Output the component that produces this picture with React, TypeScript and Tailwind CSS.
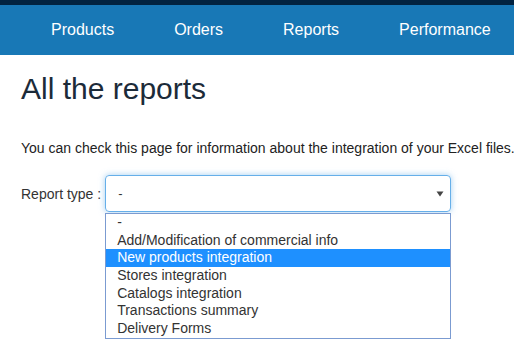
import { useState } from "react";

const NAV_ITEMS = ["Products", "Orders", "Reports", "Performance"];

const REPORT_TYPES = [
  "-",
  "Add/Modification of commercial info",
  "New products integration",
  "Stores integration",
  "Catalogs integration",
  "Transactions summary",
  "Delivery Forms",
];

function CaretDown() {
  return (
    <svg width="8" height="6" viewBox="0 0 8 6" className="text-[#444]">
      <path d="M0.5 0.5 L7.5 0.5 L4 5.5 Z" fill="currentColor" />
    </svg>
  );
}

export default function App() {
  const [hovered] = useState(2);

  return (
    <div className="w-[514px] h-[361px] overflow-hidden bg-white font-['Liberation_Sans',Arial,sans-serif] text-[#333]">
      <header>
        <div className="h-[5px] bg-[#022340]" />
        <nav className="h-[50px] bg-[#1878b6] flex items-center pl-[21px] whitespace-nowrap">
          {NAV_ITEMS.map((item) => (
            <a key={item} className="px-[30px] text-[16px] text-white leading-[20px]">
              {item}
            </a>
          ))}
        </nav>
      </header>

      <main className="px-[21px]">
        <h1 className="mt-[16px] text-[30px] leading-[36px] text-[#1c2b39]">All the reports</h1>
        <p className="mt-[31px] text-[14px] leading-[20px] whitespace-nowrap text-[#222]">
          You can check this page for information about the integration of your Excel files.
        </p>

        <div className="mt-[17px] flex items-center gap-[4px]">
          <label className="text-[14px] leading-[20px] text-[#333]">Report type :</label>
          <div className="relative">
            <div className="w-[346px] h-[37px] rounded-[4px] border border-[#66afe9] shadow-[0_0_6px_rgba(102,175,233,0.6)] flex items-center justify-between pl-[12px] pr-[6px]">
              <span className="text-[13px] leading-[18px] text-[#333]">-</span>
              <CaretDown />
            </div>
            <ul className="absolute left-0 top-[38px] w-[346px] border border-[#7b9bd1] bg-white">
              {REPORT_TYPES.map((type, i) => (
                <li
                  key={type}
                  className={
                    i === hovered
                      ? "h-[17.7px] pl-[11px] text-[14px] leading-[17px] bg-[#1e90ff] text-white"
                      : "h-[17.7px] pl-[11px] text-[14px] leading-[17px] text-[#333]"
                  }
                >
                  {type}
                </li>
              ))}
            </ul>
          </div>
        </div>
      </main>
    </div>
  );
}
